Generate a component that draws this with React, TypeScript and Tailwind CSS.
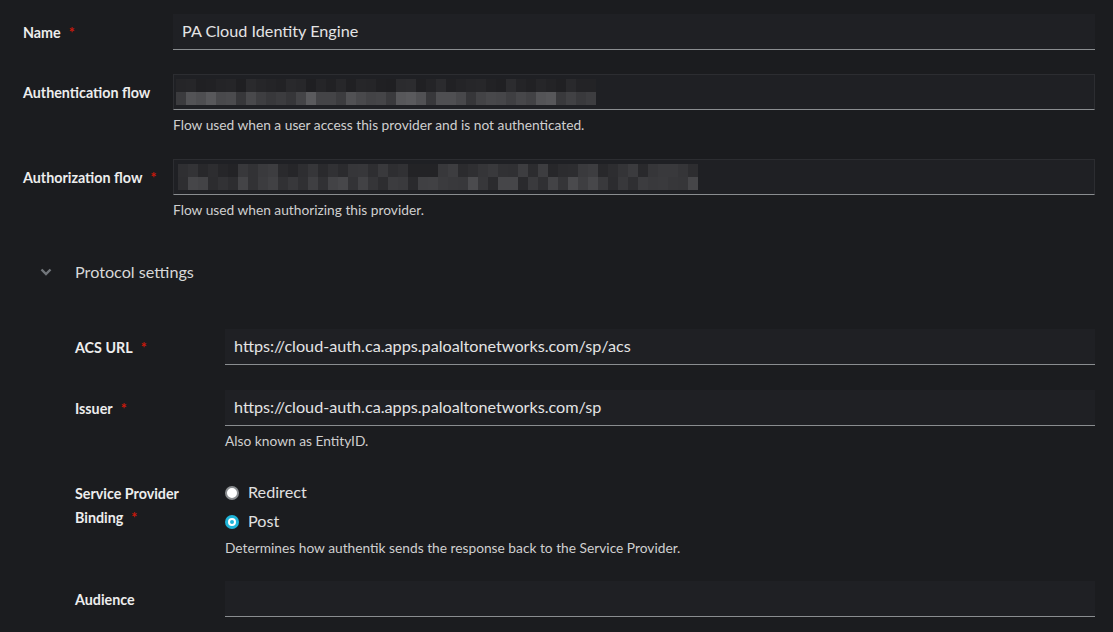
import type { ReactNode } from "react";

const FONT = { fontFamily: "Lato, 'Open Sans', sans-serif" };

// pseudo-random grays for the pixelated (redacted) select values
function shades(count: number, seed: number, min: number, max: number) {
    const out: string[] = [];
    let s = seed;
    for (let i = 0; i < count; i++) {
        s = (s * 9301 + 49297) % 233280;
        const v = Math.round(min + (s / 233280) * (max - min));
        out.push(`rgb(${v},${v},${v + 3})`);
    }
    return out;
}

function Pixelated({ blocks, seed, top, bottom }: { blocks: number; seed: number; top: [number, number]; bottom: [number, number] }) {
    const rowA = shades(blocks, seed, top[0], top[1]);
    const rowB = shades(blocks, seed + 17, bottom[0], bottom[1]);
    return (
        <div className="flex flex-col">
            <div className="flex">
                {rowA.map((c, i) => (
                    <div key={i} className="h-[13px] w-[10px]" style={{ backgroundColor: c }} />
                ))}
            </div>
            <div className="flex">
                {rowB.map((c, i) => (
                    <div key={i} className="h-[13px] w-[10px]" style={{ backgroundColor: c }} />
                ))}
            </div>
        </div>
    );
}

function Label({ children, required }: { children: ReactNode; required?: boolean }) {
    return (
        <div className="pt-[10px] text-[14.3px] font-bold leading-[18px] text-[#ededed]">
            {children}
            {required && <span className="ml-[8px] text-[#c9190b]">*</span>}
        </div>
    );
}

function TextInput({ value }: { value?: string }) {
    return (
        <div className="flex h-[36px] items-center border-b border-[#8a8d90] bg-[#1f2024] px-[9px] text-[16.2px] text-[#e4e4e4]">
            {value}
        </div>
    );
}

function Helper({ children, tight }: { children: ReactNode; tight?: boolean }) {
    return (
        <p className={`${tight ? "mt-[1px]" : "mt-[4px]"} text-[13.75px] leading-[21px] text-[#cfcfcf]`}>{children}</p>
    );
}

function Row({ label, required, children }: { label: ReactNode; required?: boolean; children: ReactNode }) {
    return (
        <div className="grid grid-cols-[150px_1fr]">
            <Label required={required}>{label}</Label>
            <div>{children}</div>
        </div>
    );
}

function Radio({ checked, label }: { checked?: boolean; label: string }) {
    return (
        <div className="flex h-[29px] items-center gap-[9px]">
            {checked ? (
                <span className="flex h-[14px] w-[14px] items-center justify-center rounded-full bg-[#1fb4d8]">
                    <span className="h-[8px] w-[8px] rounded-full border-2 border-white bg-[#1fb4d8]" />
                </span>
            ) : (
                <span className="h-[14px] w-[14px] rounded-full border-2 border-[#8a8d90] bg-white" />
            )}
            <span className="text-[16.2px] text-[#e0e0e0]">{label}</span>
        </div>
    );
}

export default function App() {
    return (
        <div className="min-h-screen bg-[#1b1c1f] pl-[23px] pr-[18px] pt-[14px]" style={FONT}>
            <div className="flex flex-col gap-[24px]">
                <Row label="Name" required>
                    <TextInput value="PA Cloud Identity Engine" />
                </Row>
                <Row label="Authentication flow">
                    <div className="flex h-[36px] items-center border border-[#2c2d31] border-b-[#8a8d90] bg-[#1f2024] pl-[2px]">
                        <Pixelated blocks={42} seed={7} top={[30, 44]} bottom={[52, 92]} />
                    </div>
                    <Helper>Flow used when a user access this provider and is not authenticated.</Helper>
                </Row>
                <Row label="Authorization flow" required>
                    <div className="flex h-[36px] items-center border border-[#2c2d31] border-b-[#8a8d90] bg-[#1f2024] pl-[4px]">
                        <Pixelated blocks={52} seed={31} top={[34, 62]} bottom={[42, 76]} />
                    </div>
                    <Helper>Flow used when authorizing this provider.</Helper>
                </Row>
            </div>

            <div className="mt-[40px] flex h-[24px] items-center">
                <svg width="12" height="8" viewBox="0 0 12 8" className="ml-[17px]">
                    <path d="M1.5 1.5 L6 6 L10.5 1.5" stroke="#72767b" strokeWidth="2.4" fill="none" />
                </svg>
                <span className="ml-[23px] text-[16.2px] text-[#d8d8d8]">Protocol settings</span>
            </div>

            <div className="mt-[45px] flex flex-col pl-[52px]">
                <Row label="ACS URL" required>
                    <TextInput value="https://cloud-auth.ca.apps.paloaltonetworks.com/sp/acs" />
                </Row>
                <div className="mt-[25px]">
                    <Row label="Issuer" required>
                        <TextInput value="https://cloud-auth.ca.apps.paloaltonetworks.com/sp" />
                        <Helper>Also known as EntityID.</Helper>
                    </Row>
                </div>
                <div className="mt-[30px] grid grid-cols-[150px_1fr]">
                    <div className="pt-[1px] text-[14.3px] font-bold leading-[24px] text-[#ededed]">
                        Service Provider
                        <br />
                        Binding<span className="ml-[8px] text-[#c9190b]">*</span>
                    </div>
                    <div className="flex flex-col">
                        <div className="-mt-[3px]">
                            <Radio label="Redirect" />
                            <Radio checked label="Post" />
                        </div>
                        <Helper tight>Determines how authentik sends the response back to the Service Provider.</Helper>
                    </div>
                </div>
                <div className="mt-[23px]">
                    <Row label="Audience">
                        <TextInput />
                    </Row>
                </div>
            </div>
        </div>
    );
}
